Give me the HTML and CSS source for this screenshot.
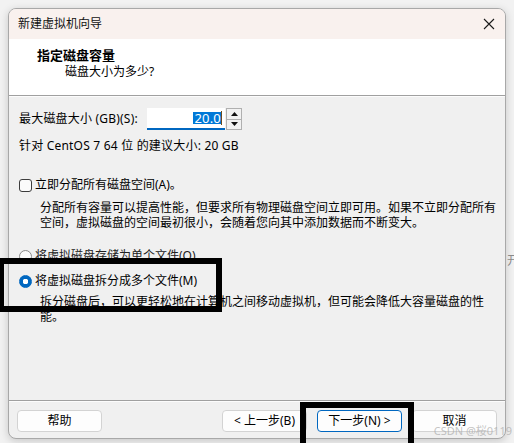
FILE: index.html
```html
<!DOCTYPE html>
<html lang="zh-CN">
<head>
<meta charset="utf-8">
<title>新建虚拟机向导</title>
<link rel="stylesheet" href="styles.css">
</head>
<body>
<div class="window">
  <div class="titlebar">
    <span class="title">新建虚拟机向导</span>
    <svg class="close" width="12" height="12" viewBox="0 0 12 12"><path d="M1 1 L11 11 M11 1 L1 11" stroke="#1a1a1a" stroke-width="1.1" fill="none"/></svg>
  </div>
  <div class="header">
    <div class="h-title">指定磁盘容量</div>
    <div class="h-sub">磁盘大小为多少?</div>
  </div>
  <div class="main">
    <div class="size-row">
      <span class="size-label">最大磁盘大小 (GB)(S):</span>
      <div class="input"><span class="sel">20.0</span><span class="caret"></span></div>
      <div class="spin">
        <span class="spin-btn"><svg width="7" height="4" viewBox="0 0 7 4"><path d="M0 4 L3.5 0 L7 4 Z" fill="#111"/></svg></span>
        <span class="spin-btn"><svg width="7" height="4" viewBox="0 0 7 4"><path d="M0 0 L3.5 4 L7 0 Z" fill="#111"/></svg></span>
      </div>
    </div>
    <div class="hint">针对 CentOS 7 64 位 的建议大小: 20 GB</div>
    <div class="option opt-check"><span class="checkbox"></span><span>立即分配所有磁盘空间(A)。</span></div>
    <p class="desc">分配所有容量可以提高性能，但要求所有物理磁盘空间立即可用。如果不立即分配所有空间，虚拟磁盘的空间最初很小，会随着您向其中添加数据而不断变大。</p>
    <div class="option opt-r1"><span class="radio"></span><span>将虚拟磁盘存储为单个文件(O)</span></div>
    <div class="option opt-r2"><span class="radio on"></span><span>将虚拟磁盘拆分成多个文件(M)</span></div>
    <p class="desc desc2">拆分磁盘后，可以更轻松地在计算机之间移动虚拟机，但可能会降低大容量磁盘的性能。</p>
  </div>
  <div class="footer">
    <button class="btn">帮助</button>
    <span class="spacer"></span>
    <button class="btn">&lt; 上一步(B)</button>
    <button class="btn primary">下一步(N) &gt;</button>
    <button class="btn">取消</button>
  </div>
</div>
<span class="frag">开</span>
<div class="mark mark1"></div>
<div class="mark mark2"></div>
<div class="watermark">CSDN @桜0119</div>
</body>
</html>
```
FILE: styles.css
```css
* { box-sizing: border-box; }
html, body { margin: 0; }
body {
  position: relative;
  width: 514px;
  height: 443px;
  overflow: hidden;
  background: #f2f2f2;
  padding: 8px 0 0 8px;
  font-family: "Noto Sans", "Noto Sans CJK SC", sans-serif;
  font-size: 12px;
  color: #000;
}
.window {
  width: 498px;
  height: 431px;
  border: 1px solid #a8a8a8;
  border-radius: 8px;
  overflow: hidden;
  background: #f0f0f0;
  box-shadow: 0 2px 8px rgba(0,0,0,0.18);
  display: flex;
  flex-direction: column;
}
.titlebar {
  height: 30px;
  flex: none;
  background: #f9f1ee;
  display: flex;
  align-items: center;
  justify-content: space-between;
  padding: 0 9px 0 9px;
}
.title { font-size: 12px; line-height: 16px; color: #111; }
.close { display: block; margin-right: 1px; }
.header {
  height: 57px;
  flex: none;
  background: #fff;
  border-bottom: 1px solid #a0a0a0;
  padding: 8px 0 0 28px;
}
.h-title { font-weight: bold; font-size: 13px; line-height: 16px; }
.h-sub { margin: 1px 0 0 28px; line-height: 16px; }
.main {
  flex: 1;
  border-top: 1px solid #fcfcfc;
  padding: 11px 0 0 10px;
}
.size-row { height: 22px; display: flex; align-items: stretch; }
.size-label { width: 128px; line-height: 22px; letter-spacing: 0.2px; }
.input {
  width: 78px;
  background: #fff;
  border-bottom: 2px solid #0067c0;
  display: flex;
  align-items: center;
  justify-content: flex-end;
  padding-right: 3px;
}
.sel {
  background: #0078d7;
  color: #fff;
  font-size: 13px;
  line-height: 12px;
  height: 12px;
  padding: 0 0 0 1px;
  letter-spacing: 0.2px;
}
.caret { width: 1px; height: 14px; background: #6a4a20; }
.spin {
  margin-left: 1px;
  width: 16px;
  border: 1px solid #b0b0b0;
  display: flex;
  flex-direction: column;
  background: #b0b0b0;
  gap: 1px;
}
.spin-btn {
  flex: 1;
  background: #f2f2f2;
  display: flex;
  align-items: center;
  justify-content: center;
}
.spin-btn svg { display: block; }
.hint { margin-top: 8px; line-height: 16px; letter-spacing: 0.2px; }
.option { display: flex; align-items: center; height: 16px; line-height: 16px; }
.opt-check { margin-top: 23px; }
.opt-r1 { margin-top: 18px; color: #222; }
.opt-r2 { margin-top: 9px; }
.checkbox {
  width: 13px; height: 13px;
  border: 1px solid #3c3c3c;
  border-radius: 3px;
  background: #fbfbfb;
  margin-right: 3px;
  flex: none;
}
.radio {
  width: 13px; height: 13px;
  border: 1px solid #8a8a8a;
  border-radius: 50%;
  background: #fbfbfb;
  margin-right: 3px;
  flex: none;
}
.radio.on {
  border-color: #0067c0;
  background: radial-gradient(circle, #fff 0 2.6px, #0067c0 3px);
}
.desc {
  margin: 7px 0 0 21px;
  width: 457px;
  line-height: 15px;
  line-break: strict;
}
.desc2 { margin-top: 5px; }
.footer {
  height: 38px;
  flex: none;
  border-top: 1px solid #a0a0a0;
  box-shadow: inset 0 1px 0 #fcfcfc;
  padding: 9px 8px 6px 8px;
  display: flex;
  gap: 10px;
}
.spacer { flex: 1; }
.btn {
  width: 85px;
  height: 22px;
  border: 1px solid #d3d3d3;
  border-radius: 4px;
  background: #fdfdfd;
  font: inherit;
  font-size: 12px;
  color: #000;
  padding: 0;
  line-height: 20px;
}
.btn.primary { border-color: #0067c0; }
.frag {
  position: absolute;
  left: 507px;
  top: 253px;
  font-size: 12px;
  line-height: 16px;
  color: #8a8a8a;
}
.mark { position: absolute; border: 6px solid #000; }
.mark1 { left: -2px; top: 258px; width: 224px; height: 54px; }
.mark2 { left: 300px; top: 402px; width: 114px; height: 60px; }
.watermark {
  position: absolute;
  right: 2px;
  bottom: 5px;
  font-size: 11px;
  line-height: 14px;
  color: rgba(170,170,170,0.7);
}
```
